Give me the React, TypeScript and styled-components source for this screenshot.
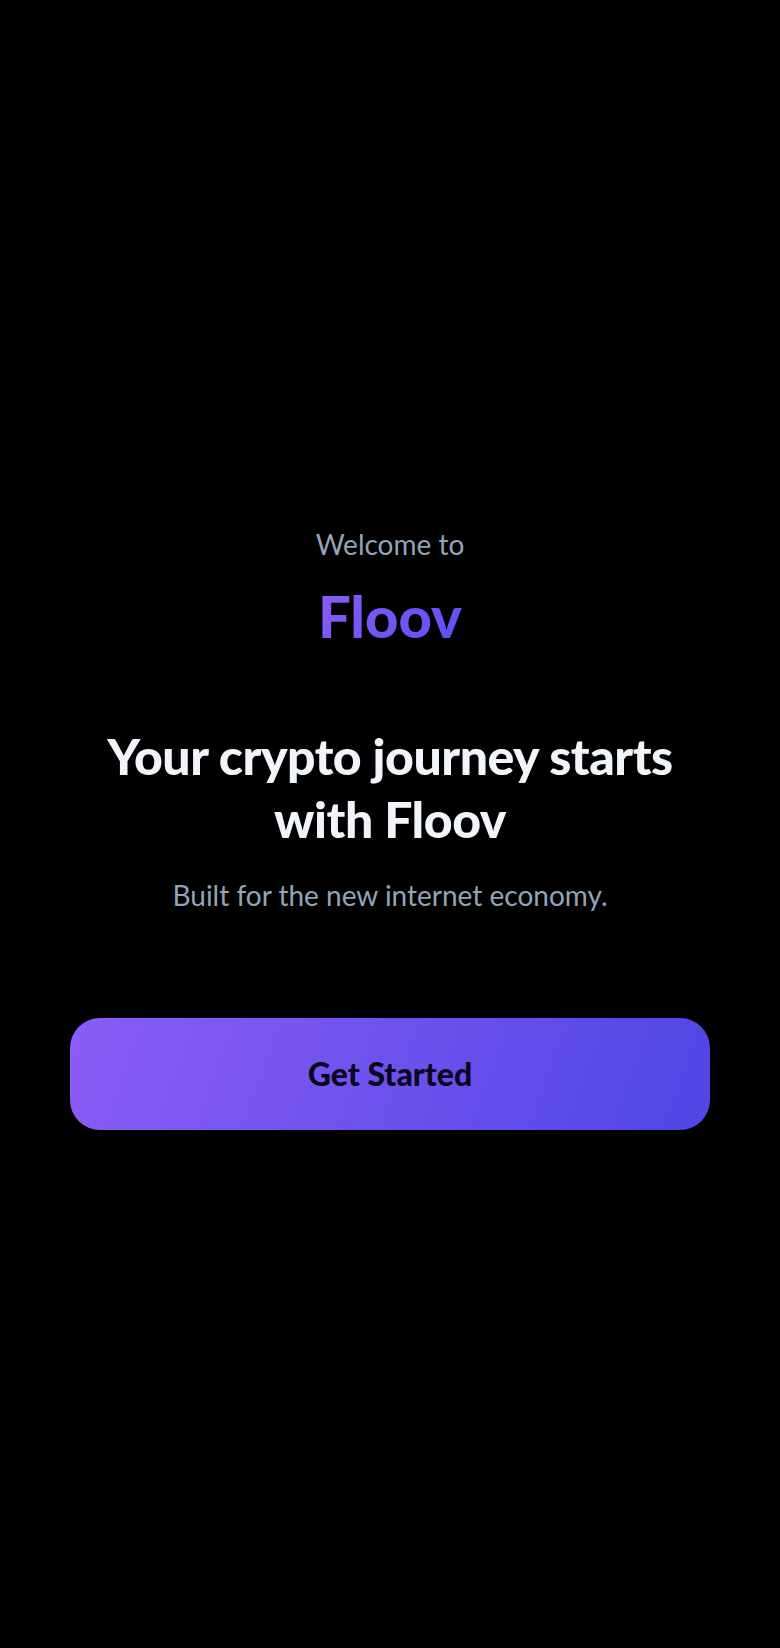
import React from 'react';
import styled, { createGlobalStyle } from 'styled-components';

const GlobalStyle = createGlobalStyle`
  html, body {
    margin: 0;
    padding: 0;
    background: #000;
  }
  body {
    font-family: 'Lato', 'Inter', sans-serif;
  }
`;

function App(): React.ReactElement {
  return (
    <Wrapper>
      <GlobalStyle />
      <Content>
        <Welcome>Welcome to</Welcome>
        <Brand>Floov</Brand>
        <Title>
          Your crypto journey starts
          <br />
          with Floov
        </Title>
        <Desc>Built for the new internet economy.</Desc>
        <StartButton type="button">Get Started</StartButton>
      </Content>
    </Wrapper>
  );
}

export default App;

const Wrapper = styled.div`
  display: flex;
  flex-direction: column;
  justify-content: center;
  align-items: center;
  width: 100%;
  min-height: 100vh;
  padding-top: 8px;
  box-sizing: border-box;
  background: #000;
`;

const Content = styled.div`
  display: flex;
  flex-direction: column;
  align-items: center;
  width: 100%;
  padding: 0 70px;
  box-sizing: border-box;
  text-align: center;
`;

const Welcome = styled.div`
  font-size: 28px;
  line-height: 34px;
  color: #94a3b8;
`;

const Brand = styled.div`
  margin-top: 23px;
  font-size: 58px;
  line-height: 64px;
  font-weight: 900;
  background: linear-gradient(135deg, #8b5cf6 0%, #5b4ff0 100%);
  -webkit-background-clip: text;
  background-clip: text;
  color: transparent;
`;

const Title = styled.h1`
  margin: 77px 0 0;
  font-size: 50px;
  line-height: 63px;
  font-weight: 900;
  color: #f1f5f9;
  letter-spacing: -0.5px;
`;

const Desc = styled.p`
  margin: 27px 0 0;
  font-size: 28px;
  line-height: 34px;
  color: #94a3b8;
`;

const StartButton = styled.button`
  margin-top: 106px;
  width: 100%;
  height: 112px;
  border: none;
  border-radius: 30px;
  background: linear-gradient(110deg, #8b5cf6 0%, #4f46e5 100%);
  font-family: 'Lato', 'Inter', sans-serif;
  font-size: 32px;
  font-weight: 900;
  color: #0b0720;
  cursor: pointer;
`;
